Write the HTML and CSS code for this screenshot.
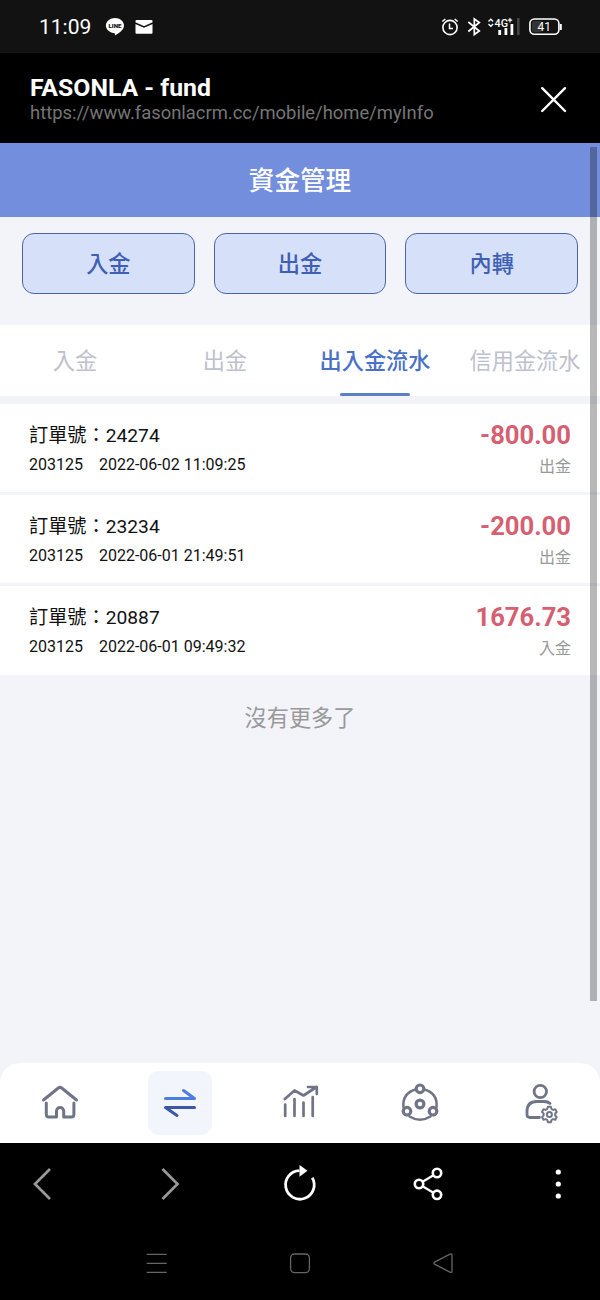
FILE: index.html
```
<!DOCTYPE html>
<html lang="zh-Hant">
<head>
    <meta charset="UTF-8">
    <meta name="viewport" content="width=device-width, initial-scale=1.0">
    <title>FASONLA - fund</title>
    <link rel="stylesheet" href="styles.css">
</head>
<body>
    <div class="status-bar">
        <span class="clock">11:09</span>
        <svg class="notify" width="60" height="30" viewBox="100 12 60 30">
            <path fill="#fff" d="M115 18c5 0 9 3.400 9 7.600 0 4.200-4.500 7.500-8.500 9.600-.8.300-.7-.4-.6-2-5-.2-9-3.400-9-7.600S110 18 115 18z"/>
            <text class="line-text" x="115" y="28" text-anchor="middle" textLength="13" lengthAdjust="spacingAndGlyphs">LINE</text>
            <rect x="135.500" y="20" width="17" height="13.800" rx="1" fill="#fff"/>
            <path d="M135 23l9 4 9-4" fill="none" stroke="#121212" stroke-width="1.500"/>
        </svg>
        <svg class="system" width="130" height="30" viewBox="438 12 130 30" fill="none" stroke="#fff">
            <circle cx="450" cy="27.500" r="7.100" stroke-width="1.600"/>
            <path stroke-width="1.500" d="M449.500 23.500v5h3.500M442.300 21.500l3-2.500M457.700 21.500l-3-2.500"/>
            <path stroke-width="1.700" d="M468.300 22l11 9-5 3.500V19l5 3.500-11 9"/>
            <path stroke-width="1.300" d="M488.500 21.500l2.300-2.300 2.300 2.300M488.500 24l2.300 2.300 2.300-2.300"/>
            <text class="net-text" x="494.500" y="26.700" textLength="13.500" lengthAdjust="spacingAndGlyphs">4G</text>
            <path stroke-width="1.200" d="M507.800 20.200h4.400M510 18v4.400"/>
            <path stroke-width="2.800" d="M499.700 30v5M505.900 28v7M511.900 24v11"/>
            <path stroke="#444" stroke-width="2.600" d="M518.300 18v17"/>
            <rect x="529.900" y="19" width="29" height="15.200" rx="4.500" stroke-width="1.600"/>
            <rect x="532" y="21" width="10" height="11.200" rx="2" fill="#333" stroke="none"/>
            <path stroke-width="2" d="M560.800 24v6"/>
            <text class="battery-text" x="544.300" y="30.800" text-anchor="middle">41</text>
        </svg>
    </div>

    <div class="browser-head">
        <div>
            <div class="page-name">FASONLA - fund</div>
            <div class="page-url">https://www.fasonlacrm.cc/mobile/home/myInfo</div>
        </div>
        <svg width="28" height="28" viewBox="0 0 28 28" fill="none" stroke="#fff" stroke-width="2.400" stroke-linecap="round">
            <path d="M3.200 3.200l22.800 22.800M26 3.200L3.200 26"/>
        </svg>
    </div>

    <div class="page">
        <h1 class="title">資金管理</h1>
        <div class="actions">
            <button class="action">入金</button>
            <button class="action">出金</button>
            <button class="action">內轉</button>
        </div>
        <div class="tabs">
            <div class="tab">入金</div>
            <div class="tab">出金</div>
            <div class="tab active">出入金流水</div>
            <div class="tab">信用金流水</div>
        </div>
        <div class="records">
            <div class="record">
                <div>
                    <div class="order">訂單號：24274</div>
                    <div class="meta"><span>203125</span><span>2022-06-02 11:09:25</span></div>
                </div>
                <div class="right">
                    <div class="amount">-800.00</div>
                    <div class="type">出金</div>
                </div>
            </div>
            <div class="record">
                <div>
                    <div class="order">訂單號：23234</div>
                    <div class="meta"><span>203125</span><span>2022-06-01 21:49:51</span></div>
                </div>
                <div class="right">
                    <div class="amount">-200.00</div>
                    <div class="type">出金</div>
                </div>
            </div>
            <div class="record">
                <div>
                    <div class="order">訂單號：20887</div>
                    <div class="meta"><span>203125</span><span>2022-06-01 09:49:32</span></div>
                </div>
                <div class="right">
                    <div class="amount">1676.73</div>
                    <div class="type">入金</div>
                </div>
            </div>
        </div>
        <div class="no-more">沒有更多了</div>

        <div class="nav">
            <div class="nav-item">
                <svg width="64" height="64" viewBox="28 1071 64 64" stroke-width="3">
                    <path d="M43.500 1100l14.800-12q1.700-1.300 3.400 0l14.800 12"/>
                    <path d="M46.300 1103v11.500q0 2.500 2.500 2.500h7.700v-6a3.600 3.600 0 0 1 7.200 0v6h7.700q2.500 0 2.500-2.500V1103"/>
                </svg>
            </div>
            <div class="nav-item">
                <div class="selected">
                    <svg width="64" height="64" viewBox="148 1071 64 64" stroke-width="3">
                        <path stroke="#4d7ddf" d="M165.500 1098.500h29l-11-8"/>
                        <path stroke="#3c57aa" d="M194.500 1107.500h-29l11.500 8"/>
                    </svg>
                </div>
            </div>
            <div class="nav-item">
                <svg width="64" height="64" viewBox="268 1071 64 64" stroke-width="2.700">
                    <path d="M285.200 1104.500v11.500M294.500 1099v17M303.500 1102.500v13.500M312.700 1097v19"/>
                    <path d="M284.800 1099l9.700-8.500 9 5 13-8.500M308 1087h8.800v7"/>
                </svg>
            </div>
            <div class="nav-item">
                <svg width="64" height="64" viewBox="388 1071 64 64" stroke-width="2.500">
                    <path d="M415.500 1089.500q-13.500 4-12 18M424.500 1089.500q13.500 4 12 18M409.500 1116.500q10.500 6.500 21 0"/>
                    <g stroke-width="3.200">
                        <circle cx="420" cy="1088.800" r="3.800"/>
                        <circle cx="420" cy="1104" r="3.900"/>
                        <circle cx="407" cy="1111.200" r="3.800"/>
                        <circle cx="433" cy="1111.200" r="3.800"/>
                    </g>
                </svg>
            </div>
            <div class="nav-item">
                <svg width="64" height="64" viewBox="508 1071 64 64" stroke-width="2.800">
                    <circle cx="540.300" cy="1091.500" r="6.200"/>
                    <path d="M550 1103.500q-2-2-6-2h-7q-10 0-10 10v3q0 3 3 3h9.500"/>
                    <g stroke-width="2">
                        <path d="M547.300 1109l.6-2.200h3l.6 2.200 1.600.9 2.200-.6 1.500 2.600-1.600 1.600v2l1.600 1.600-1.500 2.600-2.200-.6-1.600.9-.6 2.200h-3l-.6-2.200-1.600-.9-2.200.6-1.500-2.600 1.600-1.600v-2l-1.600-1.600 1.500-2.600 2.200.6z"/>
                        <circle cx="549.400" cy="1114.500" r="2.500"/>
                    </g>
                </svg>
            </div>
        </div>
        <div class="scrollbar"></div>
    </div>

    <div class="browser-bar">
        <svg width="600" height="80" viewBox="0 1144 600 80" fill="none" stroke="#fff">
            <path stroke="#999" stroke-width="2.700" d="M50 1169l-15 15 15 15M162.500 1169l15 15-15 15"/>
            <path stroke-width="2.800" d="M299.500 1170.600a14.300 14.300 0 1 0 12.800 7.200"/>
            <path fill="#fff" stroke="none" d="M299.500 1165l8 5.700-8 6z"/>
            <path stroke-width="2.200" d="M423 1181.500l10-6M423 1186.500l10 6"/>
            <g stroke-width="2.600">
                <circle cx="419" cy="1184" r="4.200"/>
                <circle cx="437" cy="1173" r="4.200"/>
                <circle cx="437" cy="1194.800" r="4.200"/>
            </g>
            <g fill="#fff" stroke="none">
                <circle cx="558.300" cy="1172" r="2.600"/>
                <circle cx="558.300" cy="1184" r="2.600"/>
                <circle cx="558.300" cy="1196" r="2.600"/>
            </g>
        </svg>
    </div>
    <div class="system-nav">
        <svg width="600" height="76" viewBox="0 1224 600 76" fill="none" stroke="#666" stroke-width="1.300">
            <path d="M146.700 1254.300h20M146.700 1263.300h20M146.700 1272.300h20"/>
            <rect x="290.600" y="1254" width="18.800" height="18.600" rx="4"/>
            <path stroke-linejoin="round" d="M434.500 1262.200l15.500-8q2-.8 2 1v16q0 1.800-2 1l-15.500-8q-1.200-1 0-2z"/>
        </svg>
    </div>
</body>
</html>
```
FILE: styles.css
```
* {
    box-sizing: border-box;
}
body {
    margin: 0;
    width: 600px;
    height: 1300px;
    overflow: hidden;
    background-color: #000;
    font-family: Roboto, "Noto Sans CJK TC", sans-serif;
}
svg {
    display: block;
}
.status-bar {
    display: flex;
    align-items: center;
    height: 53px;
    padding: 0 32px 0 39px;
    background-color: #121212;
    color: #fff;
}
.clock {
    width: 61px;
    font-size: 21px;
}
.system {
    margin-left: auto;
}
.line-text {
    font-size: 6px;
    font-weight: 900;
    fill: #121212;
}
.net-text {
    font-size: 11.5px;
    font-weight: 500;
    fill: #fff;
    stroke: none;
}
.battery-text {
    font-size: 12px;
    fill: #fff;
    stroke: none;
}
.browser-head {
    display: flex;
    justify-content: space-between;
    align-items: center;
    height: 90px;
    padding: 1px 33px 0 30px;
}
.page-name {
    font-size: 24.8px;
    line-height: 29px;
    font-weight: 700;
    color: #fff;
}
.page-url {
    font-size: 18.4px;
    line-height: 22px;
    color: #757575;
}

/* web page */
.page {
    position: relative;
    display: flex;
    flex-direction: column;
    height: 1000px;
    background-color: #f3f4f9;
}
.title {
    margin: 0;
    height: 74px;
    padding-top: 2px;
    line-height: 73px;
    background-color: #728edc;
    color: #fff;
    font-size: 25.6px;
    font-weight: 500;
    text-align: center;
}
.actions {
    display: flex;
    gap: 19px;
    padding: 16px 22px 31px;
}
.action {
    flex: 1;
    height: 61px;
    padding: 0 0 4px;
    border: 1px solid #4965ae;
    border-radius: 12px;
    background-color: #d6e0f8;
    color: #3f5fb5;
    font-family: inherit;
    font-size: 22.2px;
    font-weight: 500;
}
.tabs {
    display: flex;
    height: 71px;
    background-color: #fff;
}
.tab {
    display: flex;
    flex: 0 0 150px;
    flex-direction: column;
    align-items: center;
    line-height: 73px;
    font-size: 22.2px;
    color: #bdc1cd;
}
.tab.active {
    color: #4a71c8;
    font-weight: 500;
}
.tab.active::after {
    content: "";
    width: 70px;
    height: 3px;
    margin-top: -5px;
    border-radius: 2px;
    background-color: #5b80c8;
}
.records {
    display: flex;
    flex-direction: column;
    gap: 3px;
    margin-top: 8px;
}
.record {
    display: flex;
    justify-content: space-between;
    height: 88.2px;
    padding: 17px 29px 0;
    background-color: #fff;
}
.order {
    font-size: 19.2px;
    line-height: 30px;
    color: #111;
}
.meta {
    display: flex;
    gap: 16px;
    font-size: 16px;
    line-height: 28px;
    color: #111;
}
.right {
    text-align: right;
}
.amount {
    font-size: 25.6px;
    line-height: 28px;
    font-weight: 700;
    color: #d65f71;
}
.type {
    font-size: 16px;
    line-height: 36px;
    color: #999;
}
.no-more {
    margin-top: 27px;
    font-size: 22.2px;
    line-height: 32px;
    text-align: center;
    color: #999;
}
.nav {
    display: flex;
    height: 80px;
    margin-top: auto;
    border-radius: 20px 20px 0 0;
    background-color: #fff;
}
.nav-item {
    display: flex;
    flex: 1;
    justify-content: center;
    padding-top: 8px;
}
.nav svg {
    fill: none;
    stroke: #707487;
    stroke-linecap: round;
    stroke-linejoin: round;
}
.selected {
    height: 64px;
    border-radius: 10px;
    background-color: #f2f5fc;
}
.scrollbar {
    position: absolute;
    top: 4px;
    right: 3px;
    width: 7px;
    height: 854px;
    background-color: rgba(0, 0, 0, 0.28);
}
.browser-bar {
    height: 80px;
    margin-top: 1px;
}
.system-nav {
    height: 76px;
}
```
